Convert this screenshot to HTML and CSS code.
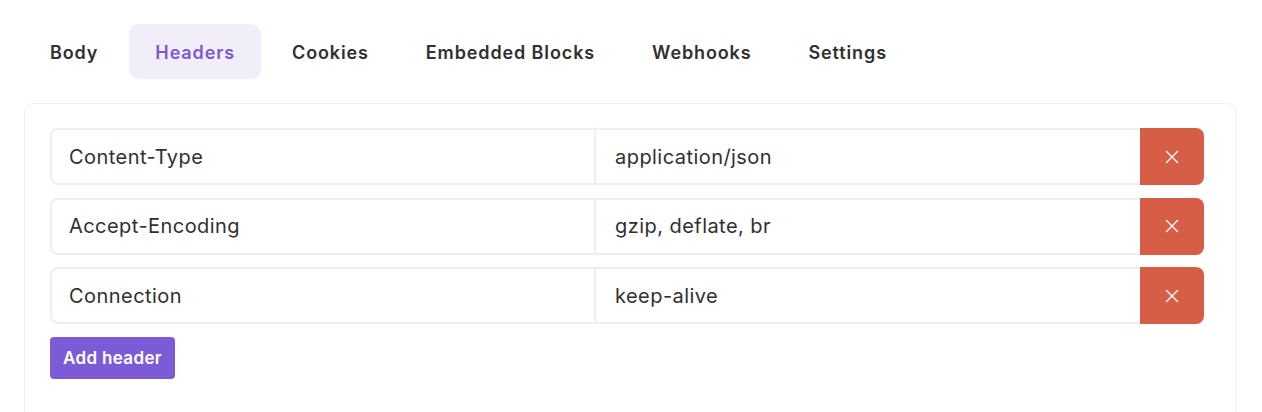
FILE: index.html
```html
<!DOCTYPE html>
<html lang="en">
<head>
<meta charset="utf-8">
<title>Headers</title>
<link rel="stylesheet" href="styles.css">
</head>
<body>
<div class="page">
  <nav class="tabs">
    <button class="tab">Body</button>
    <button class="tab active">Headers</button>
    <button class="tab">Cookies</button>
    <button class="tab">Embedded Blocks</button>
    <button class="tab">Webhooks</button>
    <button class="tab">Settings</button>
  </nav>
  <section class="card">
    <div class="rows">
      <div class="row">
        <div class="field key">Content-Type</div>
        <div class="field value">application/json</div>
        <button class="remove" aria-label="Remove"><svg viewBox="0 0 16 16" width="16" height="16"><path d="M2.5 2.5l11 11M13.5 2.5l-11 11" stroke="#fff" stroke-width="1.4" fill="none" stroke-linecap="round"/></svg></button>
      </div>
      <div class="row">
        <div class="field key">Accept-Encoding</div>
        <div class="field value">gzip, deflate, br</div>
        <button class="remove" aria-label="Remove"><svg viewBox="0 0 16 16" width="16" height="16"><path d="M2.5 2.5l11 11M13.5 2.5l-11 11" stroke="#fff" stroke-width="1.4" fill="none" stroke-linecap="round"/></svg></button>
      </div>
      <div class="row">
        <div class="field key">Connection</div>
        <div class="field value">keep-alive</div>
        <button class="remove" aria-label="Remove"><svg viewBox="0 0 16 16" width="16" height="16"><path d="M2.5 2.5l11 11M13.5 2.5l-11 11" stroke="#fff" stroke-width="1.4" fill="none" stroke-linecap="round"/></svg></button>
      </div>
    </div>
    <button class="add">Add header</button>
  </section>
</div>
</body>
</html>
```

FILE: styles.css
```css
* { box-sizing: border-box; }
html, body { margin: 0; background: #fff; }
body {
  font-family: Inter, "Noto Sans", sans-serif;
  color: #303030;
}
.page {
  padding: 24px 25px 0 24px;
  height: 412px;
  overflow: hidden;
}
.tabs {
  display: flex;
  gap: 5px;
}
.tab {
  font-family: inherit;
  font-size: 18px;
  font-weight: 600;
  letter-spacing: 0.88px;
  color: #303030;
  background: transparent;
  border: 0;
  border-radius: 10px;
  height: 55px;
  padding: 2px 26px 0;
  cursor: pointer;
}
.tab.active {
  background: #f1eefa;
  color: #7c58d6;
}
.card {
  margin-top: 24px;
  border: 1px solid #eef0f4;
  border-radius: 10px;
  padding: 24px 32px 40px 25px;
  height: 330px;
}
.rows {
  display: flex;
  flex-direction: column;
  gap: 12.5px;
}
.row {
  display: flex;
  height: 57px;
}
.field {
  flex: 1;
  display: flex;
  align-items: center;
  font-size: 20px;
  letter-spacing: 0.45px;
  color: #303030;
  border: 2px solid #eceef7;
  padding: 0 17px;
}
.field.key {
  border-radius: 8px 0 0 8px;
}
.field.value {
  border-left: 0;
  border-right: 0;
  padding-left: 19px;
}
.remove {
  width: 64px;
  flex: none;
  background: #d65e46;
  border: 0;
  border-radius: 0 8px 8px 0;
  display: flex;
  align-items: center;
  justify-content: center;
  cursor: pointer;
}
.add {
  margin-top: 12.5px;
  height: 42px;
  padding: 0 13px;
  font-family: inherit;
  font-size: 17px;
  font-weight: 600;
  letter-spacing: 0.35px;
  color: #fff;
  background: #7e5bd6;
  border: 0;
  border-radius: 4px;
  cursor: pointer;
}
```
